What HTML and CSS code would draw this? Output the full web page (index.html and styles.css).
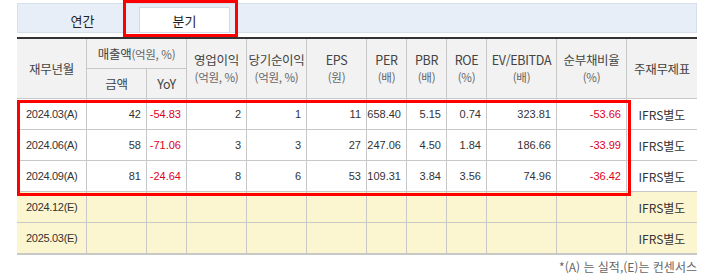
FILE: index.html
```html
<!DOCTYPE html>
<html lang="ko">
<head>
<meta charset="utf-8">
<link rel="stylesheet" href="styles.css">
</head>
<body>
<div class="wrap">
  <div class="tabs">
    <div class="tab">연간</div>
    <div class="tab active">분기</div>
  </div>
  <table class="fin">
    <colgroup>
      <col class="w70"><col class="w60"><col class="w40"><col class="w60"><col class="w60"><col class="w60">
      <col class="w40"><col class="w40"><col class="w40"><col class="w70"><col class="w70"><col class="w70">
    </colgroup>
    <thead>
      <tr class="h1">
        <th rowspan="2">재무년월</th>
        <th colspan="2">매출액<span class="sub">(억원, %)</span></th>
        <th rowspan="2">영업이익<br><span class="sub">(억원, %)</span></th>
        <th rowspan="2">당기순이익<br><span class="sub">(억원, %)</span></th>
        <th rowspan="2">EPS<br><span class="sub">(원)</span></th>
        <th rowspan="2">PER<br><span class="sub">(배)</span></th>
        <th rowspan="2">PBR<br><span class="sub">(배)</span></th>
        <th rowspan="2">ROE<br><span class="sub">(%)</span></th>
        <th rowspan="2">EV/EBITDA<br><span class="sub">(배)</span></th>
        <th rowspan="2">순부채비율<br><span class="sub">(%)</span></th>
        <th rowspan="2" class="last">주재무제표</th>
      </tr>
      <tr class="h2">
        <th>금액</th>
        <th>YoY</th>
      </tr>
    </thead>
    <tbody>
      <tr>
        <td class="date">2024.03(A)</td><td>42</td><td class="neg">-54.83</td><td>2</td><td>1</td><td>11</td><td>658.40</td><td>5.15</td><td>0.74</td><td>323.81</td><td class="neg">-53.66</td><td class="std">IFRS별도</td>
      </tr>
      <tr>
        <td class="date">2024.06(A)</td><td>58</td><td class="neg">-71.06</td><td>3</td><td>3</td><td>27</td><td>247.06</td><td>4.50</td><td>1.84</td><td>186.66</td><td class="neg">-33.99</td><td class="std">IFRS별도</td>
      </tr>
      <tr>
        <td class="date">2024.09(A)</td><td>81</td><td class="neg">-24.64</td><td>8</td><td>6</td><td>53</td><td>109.31</td><td>3.84</td><td>3.56</td><td>74.96</td><td class="neg">-36.42</td><td class="std">IFRS별도</td>
      </tr>
      <tr class="est">
        <td class="date">2024.12(E)</td><td></td><td></td><td></td><td></td><td></td><td></td><td></td><td></td><td></td><td></td><td class="std">IFRS별도</td>
      </tr>
      <tr class="est">
        <td class="date">2025.03(E)</td><td></td><td></td><td></td><td></td><td></td><td></td><td></td><td></td><td></td><td></td><td class="std">IFRS별도</td>
      </tr>
    </tbody>
  </table>
  <p class="note">*(A) 는 실적,(E)는 컨센서스</p>
  <div class="hl hl-tab"></div>
  <div class="hl hl-rows"></div>
</div>
</body>
</html>
```

FILE: styles.css
```css
html, body {
  margin: 0;
  padding: 0;
  background: #fff;
}
body {
  font-family: "Noto Sans CJK KR", "Liberation Sans", sans-serif;
  color: #333;
}
.wrap {
  position: relative;
  width: 680px;
  padding: 3px 0 0 17px;
}
.tabs {
  display: flex;
  align-items: flex-end;
  height: 28px;
  border: 1px solid #d6dee9;
  background: #e8eef8;
}
.tab {
  box-sizing: border-box;
  height: 24px;
  line-height: 25px;
  font-size: 13px;
  color: #222;
  text-align: center;
}
.tab:first-child {
  width: 121px;
  padding-left: 8px;
}
.tab.active {
  width: 91px;
  height: 25px;
  background: #fff;
  border: 1px solid #d3dae3;
  border-bottom: none;
}
.fin {
  margin-top: 4px;
  width: 680px;
  table-layout: fixed;
  border-collapse: separate;
  border-spacing: 0;
  border-top: 2px solid #333;
  border-bottom: 2px solid #c8c8c8;
  font-size: 12px;
}
.w70 { width: 70px; }
.w60 { width: 60px; }
.w40 { width: 40px; }
.fin th {
  background: #f2f2f2;
  font-weight: normal;
  color: #444;
  border-right: 1px solid #c8c8c8;
  border-bottom: 1px solid #c8c8c8;
  line-height: 17px;
  padding: 0;
  font-size: 12.5px;
  letter-spacing: -0.3px;
}
.fin th.last { border-right: none; }
.fin .sub {
  color: #666;
  font-size: 11.5px;
}
.fin tr.h1 th { height: 29px; }
.fin tr.h2 th { height: 29px; }
.fin td {
  height: 30px;
  padding: 0 5px 0 0;
  border-right: 1px solid #c8c8c8;
  border-bottom: 1px solid #c8c8c8;
  text-align: right;
  font-family: "Liberation Sans", "Noto Sans CJK KR", sans-serif;
  font-size: 11px;
  color: #333;
}
.fin tbody tr:last-child td { border-bottom: none; }
.fin td.date {
  text-align: left;
  padding-left: 9px;
  letter-spacing: -0.3px;
}
.fin td.neg { color: #e0001a; }
.fin td.std {
  text-align: center;
  padding: 0;
  border-right: none;
  font-family: "Noto Sans CJK KR", "Liberation Sans", sans-serif;
  font-size: 12px;
}
.fin tr.est td { background: #fcf6d0; }
.note {
  margin: 3px 0 0;
  text-align: right;
  font-size: 12px;
  color: #666;
}
.hl {
  position: absolute;
  box-sizing: border-box;
  border: 3px solid #ff0000;
}
.hl-tab {
  left: 123px;
  top: 0;
  width: 115px;
  height: 37px;
}
.hl-rows {
  left: 17px;
  top: 100px;
  width: 614px;
  height: 96px;
}
```
